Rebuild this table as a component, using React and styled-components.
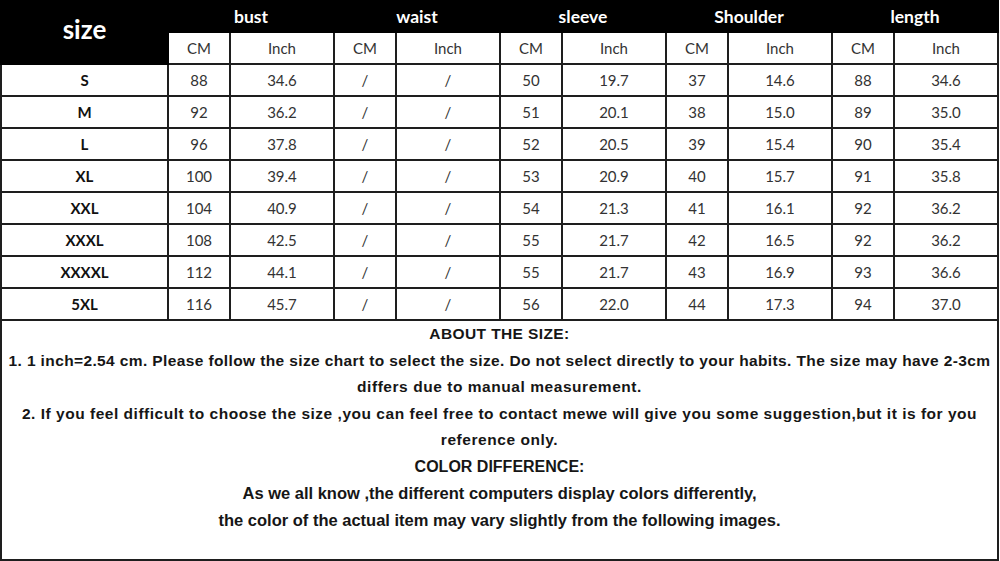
import React from "react";
import styled, { createGlobalStyle } from "styled-components";

const Global = createGlobalStyle`
  html, body { margin: 0; padding: 0; background: #fff; }
  body { width: 1000px; height: 561px; overflow: hidden; }
`;

const Page = styled.div`
  width: 999px;
  display: flex;
  flex-direction: column;
`;

const Grid = styled.div`
  display: grid;
  grid-template-columns: 165px repeat(5, 60px 102px);
  grid-template-rows: 31px repeat(9, 30px);
  gap: 2px;
  padding: 0 2px 2px 2px;
  background: #1e1e1e;
  font-family: Lato, "Open Sans", sans-serif;
`;

const SizeHead = styled.div`
  grid-row: 1 / span 2;
  grid-column: 1;
  background: #000;
  box-shadow: 0 0 0 2px #000;
  color: #fff;
  font-weight: 700;
  font-size: 26px;
  display: flex;
  align-items: center;
  justify-content: center;
  padding-bottom: 5px;
`;

const GroupHead = styled.div`
  grid-row: 1;
  grid-column: span 2;
  background: #000;
  box-shadow: 0 0 0 2px #000;
  color: #fff;
  font-weight: 700;
  font-size: 17.5px;
  display: flex;
  align-items: center;
  justify-content: center;
  padding-top: 2px;
`;

const Cell = styled.div`
  background: #fff;
  color: ${(p) => (p.$bold ? "#111" : "#333")};
  font-weight: ${(p) => (p.$bold ? 700 : 400)};
  font-size: 15px;
  display: flex;
  align-items: center;
  justify-content: center;
`;

const Notes = styled.div`
  border: 2px solid #1e1e1e;
  border-top: none;
  height: 212px;
  padding-bottom: 26px;
  display: flex;
  flex-direction: column;
  align-items: center;
  font-family: "Liberation Sans", Arial, sans-serif;
  font-weight: 700;
  color: #161616;
`;

const Line = styled.div`
  height: 26.5px;
  line-height: 26.5px;
  font-size: ${(p) => p.$size || "15.5px"};
  letter-spacing: ${(p) => p.$ls || "0.45px"};
  white-space: nowrap;
  text-align: center;
`;

const groups = ["bust", "waist", "sleeve", "Shoulder", "length"];

const rows = [
  ["S", "88", "34.6", "/", "/", "50", "19.7", "37", "14.6", "88", "34.6"],
  ["M", "92", "36.2", "/", "/", "51", "20.1", "38", "15.0", "89", "35.0"],
  ["L", "96", "37.8", "/", "/", "52", "20.5", "39", "15.4", "90", "35.4"],
  ["XL", "100", "39.4", "/", "/", "53", "20.9", "40", "15.7", "91", "35.8"],
  ["XXL", "104", "40.9", "/", "/", "54", "21.3", "41", "16.1", "92", "36.2"],
  ["XXXL", "108", "42.5", "/", "/", "55", "21.7", "42", "16.5", "92", "36.2"],
  ["XXXXL", "112", "44.1", "/", "/", "55", "21.7", "43", "16.9", "93", "36.6"],
  ["5XL", "116", "45.7", "/", "/", "56", "22.0", "44", "17.3", "94", "37.0"],
];

export default function App() {
  return (
    <Page>
      <Global />
      <Grid>
        <SizeHead>size</SizeHead>
        {groups.map((g) => (
          <GroupHead key={g}>{g}</GroupHead>
        ))}
        {groups.map((g) => (
          <React.Fragment key={g + "u"}>
            <Cell>CM</Cell>
            <Cell>Inch</Cell>
          </React.Fragment>
        ))}
        {rows.map((r) =>
          r.map((v, i) => (
            <Cell key={r[0] + i} $bold={i === 0}>
              {v}
            </Cell>
          ))
        )}
      </Grid>
      <Notes>
        <Line $ls="0.4px">ABOUT THE SIZE:</Line>
        <Line $ls="0.38px">
          1. 1 inch=2.54 cm. Please follow the size chart to select the size. Do not select directly to your habits. The size may have 2-3cm
        </Line>
        <Line $ls="0.55px">differs due to manual measurement.</Line>
        <Line $ls="0.52px">
          2. If you feel difficult to choose the size ,you can feel free to contact mewe will give you some suggestion,but it is for you
        </Line>
        <Line $ls="0.55px">reference only.</Line>
        <Line $size="16px" $ls="0">COLOR DIFFERENCE:</Line>
        <Line $size="16.5px" $ls="0">
          As we all know ,the different computers display colors differently,
        </Line>
        <Line $size="16.5px" $ls="0">
          the color of the actual item may vary slightly from the following images.
        </Line>
      </Notes>
    </Page>
  );
}
